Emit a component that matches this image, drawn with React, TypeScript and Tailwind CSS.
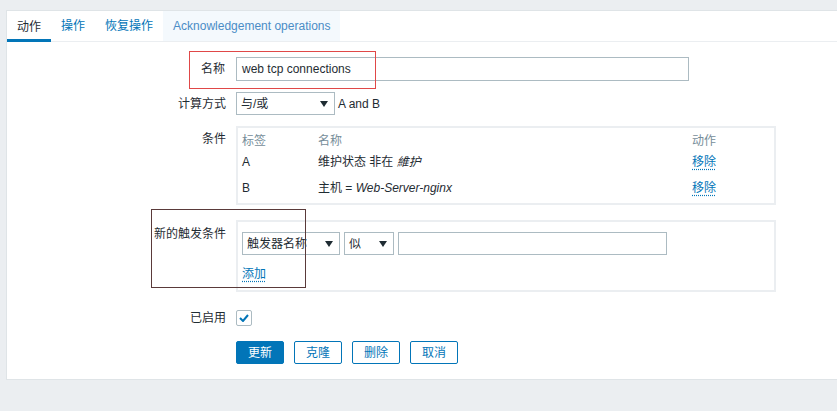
import React from "react";

const font = { fontFamily: '"Liberation Sans", Arial, "Noto Sans CJK SC", sans-serif' };

function Arrow() {
  return (
    <svg width="8" height="6" viewBox="0 0 8 6" className="shrink-0">
      <path d="M0 0 L8 0 L4 6 Z" fill="#1f2c33" />
    </svg>
  );
}

function Select({ w, text }: { w: string; text: string }) {
  return (
    <div className={`${w} h-[23px] border border-[#acbbc2] bg-white flex items-center justify-between pl-[4px] pr-[6px] text-[#1f2c33] overflow-hidden whitespace-nowrap`}>
      <span>{text}</span>
      <Arrow />
    </div>
  );
}

function Link({ children }: { children: React.ReactNode }) {
  return (
    <span className="text-[#0275b8] underline decoration-dotted underline-offset-[3px]">{children}</span>
  );
}

function Btn({ children, primary }: { children: React.ReactNode; primary?: boolean }) {
  return (
    <div
      className={
        primary
          ? "w-[48px] h-[23px] rounded-[2px] bg-[#0275b8] border border-[#0275b8] text-white flex items-center justify-center"
          : "w-[48px] h-[23px] rounded-[2px] bg-white border border-[#0275b8] text-[#0275b8] flex items-center justify-center"
      }
    >
      {children}
    </div>
  );
}

export default function App() {
  return (
    <div className="w-[837px] h-[411px] bg-[#ebeef1] overflow-hidden pt-[10px] pl-[6px] text-[12px] leading-[14px]" style={font}>
      <div className="relative w-[840px] h-[370px] bg-white border border-[#dfe4e7] border-r-0">
        {/* tabs */}
        <div className="flex h-[31px] border-b border-[#ebeef1] text-[12px]">
          <div className="px-[10px] flex items-center border-b-[3px] border-[#0275b8] text-[#1f2c33] pt-[3px] -mb-[1px]">动作</div>
          <div className="px-[10px] flex items-center text-[#0275b8]">操作</div>
          <div className="px-[10px] flex items-center text-[#0275b8]">恢复操作</div>
          <div className="px-[10px] flex items-center bg-[#f4f9fd] text-[#4a8cc6]">Acknowledgement operations</div>
        </div>

        {/* form */}
        <div className="flex flex-col pt-[15px] text-[#1f2c33]">
          {/* 名称 */}
          <div className="flex items-center">
            <div className="w-[219px] text-right pr-[1px]">名称</div>
            <div className="ml-[10px] w-[453px] h-[24px] border border-[#acbbc2] flex items-center px-[5px]">web tcp connections</div>
          </div>
          {/* 计算方式 */}
          <div className="flex items-center mt-[11px]">
            <div className="w-[219px] text-right">计算方式</div>
            <div className="ml-[10px]"><Select w="w-[99px]" text="与/或" /></div>
            <div className="ml-[3px]">A and B</div>
          </div>
          {/* 条件 */}
          <div className="flex items-start mt-[11px]">
            <div className="w-[219px] text-right pt-[6px]">条件</div>
            <div className="ml-[10px] w-[540px] h-[79px] border-2 border-[#ebeef1] px-[4px] pt-[6px]">
              <div className="flex text-[#768d99]">
                <div className="w-[76px]">标签</div>
                <div className="w-[374px]">名称</div>
                <div>动作</div>
              </div>
              <div className="flex mt-[7px]">
                <div className="w-[76px]">A</div>
                <div className="w-[374px]">维护状态 非在 <i>維护</i></div>
                <div><Link>移除</Link></div>
              </div>
              <div className="flex mt-[12px]">
                <div className="w-[76px]">B</div>
                <div className="w-[374px]">主机 = <i>Web-Server-nginx</i></div>
                <div><Link>移除</Link></div>
              </div>
            </div>
          </div>
          {/* 新的触发条件 */}
          <div className="flex items-start mt-[15px]">
            <div className="w-[219px] text-right pt-[7px]">新的触发条件</div>
            <div className="ml-[10px] w-[540px] h-[72px] border-2 border-[#ebeef1] px-[4px] pt-[10px]">
              <div className="flex gap-[4px]">
                <Select w="w-[98px]" text="触发器名称" />
                <Select w="w-[50px]" text="似" />
                <div className="w-[269px] h-[23px] border border-[#acbbc2]" />
              </div>
              <div className="mt-[12px]"><Link>添加</Link></div>
            </div>
          </div>
          {/* 已启用 */}
          <div className="flex items-center mt-[18px]">
            <div className="w-[219px] text-right">已启用</div>
            <div className="ml-[10px] w-[16px] h-[16px] border border-[#acbbc2] rounded-[2px] flex items-center justify-center">
              <svg width="10" height="8" viewBox="0 0 10 8">
                <path d="M1 4 L4 7 L9 1" fill="none" stroke="#0275b8" strokeWidth="2" />
              </svg>
            </div>
          </div>
          {/* buttons */}
          <div className="flex mt-[15px] ml-[229px] gap-[10px]">
            <Btn primary>更新</Btn>
            <Btn>克隆</Btn>
            <Btn>删除</Btn>
            <Btn>取消</Btn>
          </div>
        </div>

        {/* annotation rectangles */}
        <div className="absolute left-[182px] top-[40px] w-[187px] h-[38px] border border-[#e04848]" />
        <div className="absolute left-[144px] top-[198px] w-[155px] h-[79px] border border-[#5a3a3a]" />
      </div>
    </div>
  );
}
